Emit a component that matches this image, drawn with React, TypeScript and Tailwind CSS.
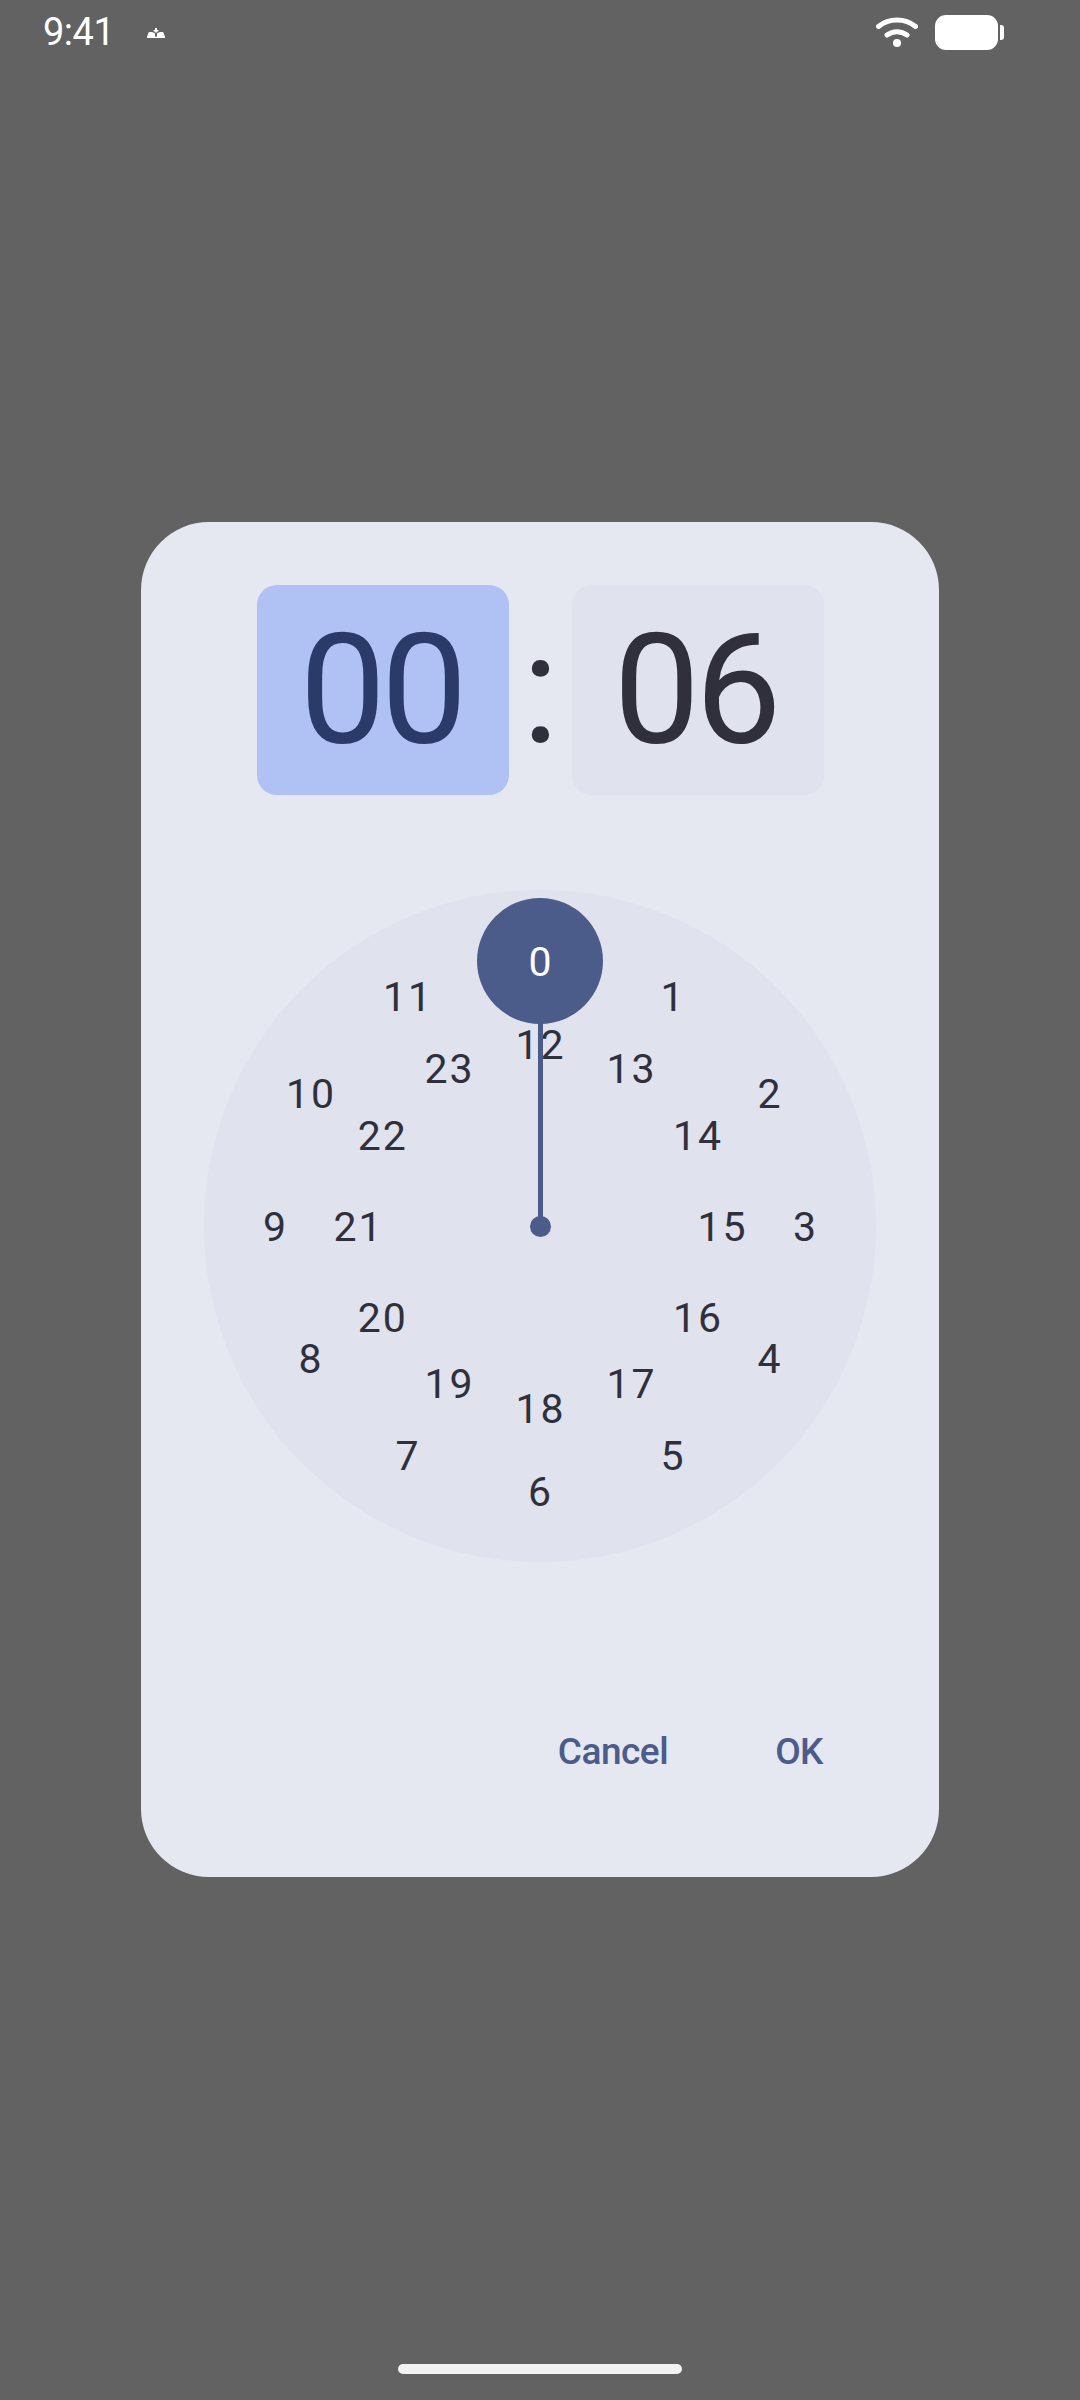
const OUTER = [0, 1, 2, 3, 4, 5, 6, 7, 8, 9, 10, 11];
const INNER = [12, 13, 14, 15, 16, 17, 18, 19, 20, 21, 22, 23];

const StatusBar = () => (
    <div className="flex items-center h-[64px] pl-[43px] pr-[76px] text-white">
        <span className="text-[38px] leading-none tracking-[-0.5px] mt-[-1px]">9:41</span>
        <svg width="18" height="10" viewBox="0 0 18 10" className="ml-[33px] mt-[1px]" fill="white">
            <path d="M8 0h2v2h2l-3 3-3-3h2z" />
            <path d="M0 9 1.500 4.500C3.500 3.800 5.500 4 8 5.500V9zM18 9l-1.500-4.500C14.500 3.800 12.500 4 10 5.500V9z" />
            <rect x="0" y="8.600" width="18" height="1.400" />
        </svg>
        <div className="ml-auto flex items-center">
            <svg width="42" height="30" viewBox="0 0 42 30" fill="none" stroke="white" strokeLinecap="round">
                <path d="M2.500 9.500C13 .8 29 .8 39.500 9.500" strokeWidth="5" />
                <path d="M11 18c6-4.500 14-4.500 20 0" strokeWidth="5" />
                <circle cx="21" cy="26" r="4" fill="white" stroke="none" />
            </svg>
            <div className="w-[63px] h-[35px] ml-[17px] bg-white rounded-[11px]" />
            <div className="w-[4px] h-[15px] ml-[2px] bg-white rounded-r-[3px]" />
        </div>
    </div>
);

const Num = ({ n, r, i }: { n: number; r: number; i: number }) => {
    const a = (i * Math.PI) / 6;
    return (
        <span
            className="absolute -translate-x-1/2 -translate-y-1/2"
            style={{ left: 336.5 + r * Math.sin(a), top: 336.8 - r * Math.cos(a) }}
        >
            {n}
        </span>
    );
};

const Clock = () => (
    <div className="relative w-[672px] h-[672px] rounded-full bg-[#e0e2ed] text-[41px] leading-none tracking-[2px] text-[#2f303b]">
        {OUTER.map((n, i) => (
            <Num key={n} n={n} r={265} i={i} />
        ))}
        {INNER.map((n, i) => (
            <Num key={n} n={n} r={182} i={i} />
        ))}
        {/* hand */}
        <div className="absolute left-[333.5px] top-[130px] w-[5px] h-[206px] bg-[#4c5c8a]" />
        <div className="absolute left-[326px] top-[326px] w-[21px] h-[21px] rounded-full bg-[#4c5c8a]" />
        <div className="absolute left-[273px] top-[8px] w-[126px] h-[126px] pt-[3px] rounded-full bg-[#4c5c8a] text-white tracking-normal flex items-center justify-center">
            0
        </div>
    </div>
);

export default function App() {
    return (
        <div className="flex flex-col h-[2400px] bg-[#626262] font-['Roboto',sans-serif]">
            <StatusBar />

            <div className="mt-[458px] mx-auto w-[798px] h-[1355px] pt-[63px] rounded-[68px] bg-[#e5e7f1] flex flex-col items-center">
                {/* time inputs */}
                <div className="flex items-center pl-[1px]">
                    <div className="w-[252px] h-[210px] pr-[4px] pt-[1px] rounded-[20px] bg-[#b0c1f3] text-[#2a3b69] text-[154px] leading-none tracking-[-5px] flex items-center justify-center">
                        00
                    </div>
                    <div className="w-[63px] text-center text-[154px] leading-none text-[#2f303b]">:</div>
                    <div className="w-[252px] h-[210px] pr-[6px] pt-[1px] rounded-[20px] bg-[#e0e2ed] text-[#2f303b] text-[154px] leading-none tracking-[-5px] flex items-center justify-center">
                        06
                    </div>
                </div>

                <div className="mt-[95px]">
                    <Clock />
                </div>

                <div className="w-full flex justify-end gap-[107px] pr-[116px] mt-[171px] text-[37px] leading-none font-medium tracking-[-0.5px] text-[#4c5c8a]">
                    <span>Cancel</span>
                    <span>OK</span>
                </div>
            </div>

            <div className="mt-auto mb-[26px] mx-auto w-[284px] h-[10px] rounded-full bg-[#f2f2f2]" />
        </div>
    );
}
